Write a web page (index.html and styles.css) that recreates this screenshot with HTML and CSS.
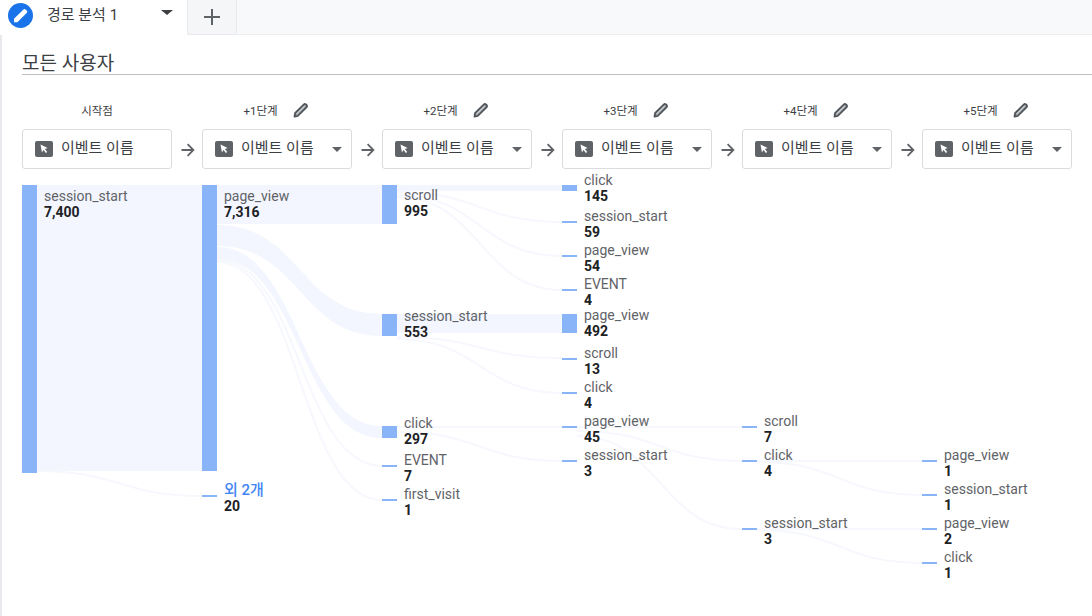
FILE: index.html
```html
<!DOCTYPE html>
<html lang="ko">
<head>
<meta charset="utf-8">
<title>경로 분석</title>
<link rel="stylesheet" href="styles.css">
</head>
<body>
<svg class="defs" width="0" height="0" aria-hidden="true">
  <defs>
    <symbol id="pencil" viewBox="0 0 16 16">
      <path d="M2 11.2 10.9 2.3a1.4 1.4 0 0 1 2 0l.8.8a1.4 1.4 0 0 1 0 2l-8.9 8.9-3.3.7z" fill="#9aa0a6" stroke="#4f5357" stroke-width="1.7" stroke-linejoin="round"/>
      <path d="M3.8 11.8 11.6 4" stroke="#e8eaed" stroke-width="1" fill="none"/>
    </symbol>
    <symbol id="cursor" viewBox="0 0 18 16">
      <rect width="18" height="16" rx="2" fill="#5f6368"/>
      <path d="M5.5 3.6 12.6 7l-2.7 1 2.3 3-1.3 1-2.3-3-1.7 2.3z" fill="#fff"/>
    </symbol>
    <symbol id="arrow" viewBox="0 0 14 14">
      <path d="M0.5 7h11.7M6.6 1.2 12.4 7l-5.8 5.8" fill="none" stroke="#5f6368" stroke-width="1.8"/>
    </symbol>
  </defs>
</svg>
<header class="tabbar">
  <div class="tab">
    <span class="tab-badge">
      <svg width="18" height="18" viewBox="0 0 16 16"><path d="M1.8 11.4 10.2 3a1.3 1.3 0 0 1 1.8 0l1.2 1.2a1.3 1.3 0 0 1 0 1.8L4.8 14.4H1.8z" fill="#fff"/></svg>
    </span>
    <span class="tab-name">경로 분석 1</span>
    <span class="tab-caret"></span>
  </div>
  <div class="tab-add">
    <svg width="16" height="16" viewBox="0 0 16 16"><path d="M8 0v16M0 8h16" stroke="#5f6368" stroke-width="2"/></svg>
  </div>
</header>
<main class="main">
  <h1 class="segment">모든 사용자</h1>
  <div class="steps">
    <section class="step">
      <div class="step-head">시작점</div>
      <div class="step-card"><svg class="cursor"><use href="#cursor"/></svg><span>이벤트 이름</span></div>
    </section>
    <svg class="step-arrow"><use href="#arrow"/></svg>
    <section class="step">
      <div class="step-head"><span>+1단계</span><svg class="pencil"><use href="#pencil"/></svg></div>
      <div class="step-card"><svg class="cursor"><use href="#cursor"/></svg><span>이벤트 이름</span><i class="caret"></i></div>
    </section>
    <svg class="step-arrow"><use href="#arrow"/></svg>
    <section class="step">
      <div class="step-head"><span>+2단계</span><svg class="pencil"><use href="#pencil"/></svg></div>
      <div class="step-card"><svg class="cursor"><use href="#cursor"/></svg><span>이벤트 이름</span><i class="caret"></i></div>
    </section>
    <svg class="step-arrow"><use href="#arrow"/></svg>
    <section class="step">
      <div class="step-head"><span>+3단계</span><svg class="pencil"><use href="#pencil"/></svg></div>
      <div class="step-card"><svg class="cursor"><use href="#cursor"/></svg><span>이벤트 이름</span><i class="caret"></i></div>
    </section>
    <svg class="step-arrow"><use href="#arrow"/></svg>
    <section class="step">
      <div class="step-head"><span>+4단계</span><svg class="pencil"><use href="#pencil"/></svg></div>
      <div class="step-card"><svg class="cursor"><use href="#cursor"/></svg><span>이벤트 이름</span><i class="caret"></i></div>
    </section>
    <svg class="step-arrow"><use href="#arrow"/></svg>
    <section class="step">
      <div class="step-head"><span>+5단계</span><svg class="pencil"><use href="#pencil"/></svg></div>
      <div class="step-card"><svg class="cursor"><use href="#cursor"/></svg><span>이벤트 이름</span><i class="caret"></i></div>
    </section>
  </div>
  <div class="sankey">
    <svg class="links" width="1090" height="441" viewBox="2 175 1090 441">
      <g class="band">
        <path d="M37 185H202V471H37z"/>
        <path d="M217 185H382V224H217z"/>
        <path d="M217 225C300 225 300 314 382 314V336C300 336 300 246 217 246z"/>
        <path d="M217 247C300 247 300 426 382 426V438C300 438 300 259 217 259z"/>
        <path d="M397 185H562V191H397z"/>
        <path d="M397 314H562V333H397z"/>
      </g>
      <g class="thin">
        <path d="M37 471C120 471 120 496 202 496"/>
        <path d="M217 260C300 260 300 466 382 466" stroke-width="1.5"/>
        <path d="M217 262C300 262 300 500 382 500" stroke-width="1"/>
        <path d="M397 192C480 192 480 222 562 222" stroke-width="2"/>
        <path d="M397 195C480 195 480 256 562 256" stroke-width="2"/>
        <path d="M397 197C480 197 480 290 562 290" stroke-width="1.2"/>
        <path d="M397 337C480 337 480 358 562 358" stroke-width="1.5"/>
        <path d="M397 339C480 339 480 393 562 393" stroke-width="1.2"/>
        <path d="M397 427H562" stroke-width="2"/>
        <path d="M397 432C480 432 480 461 562 461" stroke-width="1.2"/>
        <path d="M577 427H742" stroke-width="1.5"/>
        <path d="M577 431C660 431 660 461 742 461" stroke-width="1.2"/>
        <path d="M577 436C660 436 660 529 742 529" stroke-width="1"/>
        <path d="M757 461H922" stroke-width="1"/>
        <path d="M757 462C840 462 840 495 922 495" stroke-width="1"/>
        <path d="M757 529H922" stroke-width="1.5"/>
        <path d="M757 530C840 530 840 563 922 563" stroke-width="1"/>
      </g>
    </svg>

    <div class="bar" style="left:20px;top:10px;height:288px"></div>
    <div class="node" style="left:42px;top:13px"><span class="name">session_start</span><b class="value">7,400</b></div>

    <div class="bar" style="left:200px;top:10px;height:286px"></div>
    <div class="node" style="left:222px;top:13px"><span class="name">page_view</span><b class="value">7,316</b></div>
    <div class="bar" style="left:200px;top:320px;height:2px"></div>
    <div class="node" style="left:222px;top:307px"><span class="name more">외 2개</span><b class="value">20</b></div>

    <div class="bar" style="left:380px;top:10px;height:39px"></div>
    <div class="node" style="left:402px;top:12px"><span class="name">scroll</span><b class="value">995</b></div>
    <div class="bar" style="left:380px;top:139px;height:22px"></div>
    <div class="node" style="left:402px;top:133px"><span class="name">session_start</span><b class="value">553</b></div>
    <div class="bar" style="left:380px;top:251px;height:12px"></div>
    <div class="node" style="left:402px;top:240px"><span class="name">click</span><b class="value">297</b></div>
    <div class="bar" style="left:380px;top:290px;height:2px"></div>
    <div class="node" style="left:402px;top:277px"><span class="name">EVENT</span><b class="value">7</b></div>
    <div class="bar" style="left:380px;top:324px;height:2px"></div>
    <div class="node" style="left:402px;top:311px"><span class="name">first_visit</span><b class="value">1</b></div>

    <div class="bar" style="left:560px;top:10px;height:6px"></div>
    <div class="node" style="left:582px;top:-3px"><span class="name">click</span><b class="value">145</b></div>
    <div class="bar" style="left:560px;top:46px;height:2px"></div>
    <div class="node" style="left:582px;top:33px"><span class="name">session_start</span><b class="value">59</b></div>
    <div class="bar" style="left:560px;top:80px;height:2px"></div>
    <div class="node" style="left:582px;top:67px"><span class="name">page_view</span><b class="value">54</b></div>
    <div class="bar" style="left:560px;top:114px;height:2px"></div>
    <div class="node" style="left:582px;top:101px"><span class="name">EVENT</span><b class="value">4</b></div>
    <div class="bar" style="left:560px;top:139px;height:19px"></div>
    <div class="node" style="left:582px;top:132px"><span class="name">page_view</span><b class="value">492</b></div>
    <div class="bar" style="left:560px;top:183px;height:2px"></div>
    <div class="node" style="left:582px;top:170px"><span class="name">scroll</span><b class="value">13</b></div>
    <div class="bar" style="left:560px;top:217px;height:2px"></div>
    <div class="node" style="left:582px;top:204px"><span class="name">click</span><b class="value">4</b></div>
    <div class="bar" style="left:560px;top:251px;height:2px"></div>
    <div class="node" style="left:582px;top:238px"><span class="name">page_view</span><b class="value">45</b></div>
    <div class="bar" style="left:560px;top:285px;height:2px"></div>
    <div class="node" style="left:582px;top:272px"><span class="name">session_start</span><b class="value">3</b></div>

    <div class="bar" style="left:740px;top:251px;height:2px"></div>
    <div class="node" style="left:762px;top:238px"><span class="name">scroll</span><b class="value">7</b></div>
    <div class="bar" style="left:740px;top:285px;height:2px"></div>
    <div class="node" style="left:762px;top:272px"><span class="name">click</span><b class="value">4</b></div>
    <div class="bar" style="left:740px;top:353px;height:2px"></div>
    <div class="node" style="left:762px;top:340px"><span class="name">session_start</span><b class="value">3</b></div>

    <div class="bar" style="left:920px;top:285px;height:2px"></div>
    <div class="node" style="left:942px;top:272px"><span class="name">page_view</span><b class="value">1</b></div>
    <div class="bar" style="left:920px;top:319px;height:2px"></div>
    <div class="node" style="left:942px;top:306px"><span class="name">session_start</span><b class="value">1</b></div>
    <div class="bar" style="left:920px;top:353px;height:2px"></div>
    <div class="node" style="left:942px;top:340px"><span class="name">page_view</span><b class="value">2</b></div>
    <div class="bar" style="left:920px;top:387px;height:2px"></div>
    <div class="node" style="left:942px;top:374px"><span class="name">click</span><b class="value">1</b></div>
  </div>
</main>
</body>
</html>
```
FILE: styles.css
```css
* { box-sizing: border-box; }
html, body { margin: 0; height: 100%; overflow: hidden; }
body {
  background: #fff;
  color: #202124;
  font-family: Roboto, "Noto Sans CJK KR", sans-serif;
  display: flex;
  flex-direction: column;
  height: 616px;
}
.defs { position: absolute; }
.tabbar {
  display: flex;
  height: 35px;
  background: #f8f9fa;
  border-bottom: 1px solid #eceef0;
  flex: none;
}
.tab {
  width: 187px;
  height: 35px;
  background: #fff;
  display: flex;
  align-items: center;
  padding: 0 14px 5px 8px;
  margin-bottom: -1px;
}
.tab-badge {
  width: 25px;
  height: 25px;
  border-radius: 50%;
  background: #1a73e8;
  display: flex;
  align-items: center;
  justify-content: center;
  flex: none;
}
.tab-name {
  margin-left: 14px;
  font-size: 15px;
  line-height: 20px;
  color: #3c4043;
  flex: 1;
}
.tab-caret {
  width: 0;
  height: 0;
  border-left: 6px solid transparent;
  border-right: 6px solid transparent;
  border-top: 5px solid #3c4043;
  margin-bottom: 6px;
}
.tab-add {
  width: 50px;
  height: 35px;
  background: #f5f6f7;
  border: 1px solid #e8eaed;
  border-top: 0;
  border-radius: 0 0 4px 4px;
  display: flex;
  align-items: center;
  justify-content: center;
}
.main {
  flex: 1;
  border-left: 2px solid #e8eaed;
  display: flex;
  flex-direction: column;
  min-height: 0;
}
.segment {
  margin: 15px 0 0 20px;
  height: 25px;
  font-size: 19px;
  line-height: 27px;
  font-weight: 400;
  color: #3c4043;
  border-bottom: 1px solid #bdc1c6;
}
.steps {
  display: flex;
  align-items: flex-end;
  margin: 26px 0 0 20px;
}
.step { width: 150px; flex: none; }
.step-head {
  height: 18px;
  display: flex;
  align-items: center;
  justify-content: center;
  gap: 15px;
  font-size: 11.5px;
  color: #3c4043;
  margin-bottom: 10px;
}
.pencil { width: 16px; height: 16px; margin-right: 2px; }
.step-card {
  height: 40px;
  background: #fff;
  border: 1px solid #dadce0;
  border-radius: 3px;
  display: flex;
  align-items: center;
  padding: 0 9px 0 12px;
  font-size: 15px;
  color: #3c4043;
}
.step-card span { margin-left: 8px; flex: 1; position: relative; top: -3px; }
.cursor { width: 18px; height: 16px; flex: none; }
.caret {
  width: 0;
  height: 0;
  border-left: 5px solid transparent;
  border-right: 5px solid transparent;
  border-top: 5px solid #5f6368;
}
.step-arrow { width: 14px; height: 14px; margin: 0 7px 12px 9px; flex: none; }
.sankey { position: relative; flex: 1; margin-top: 6px; }
.links { position: absolute; left: 0; top: 0; }
.band path { fill: #f3f6fe; }
.thin path { fill: none; stroke: #f6f8fe; stroke-width: 2; }
.bar { position: absolute; width: 15px; background: #8ab4f8; }
.node { position: absolute; display: flex; flex-direction: column; font-size: 14px; line-height: 16px; white-space: nowrap; }
.name { color: #5f6368; }
.more { color: #4285f4; font-weight: 500; font-size: 15px; }
.value { color: #202124; font-weight: 700; }
```
